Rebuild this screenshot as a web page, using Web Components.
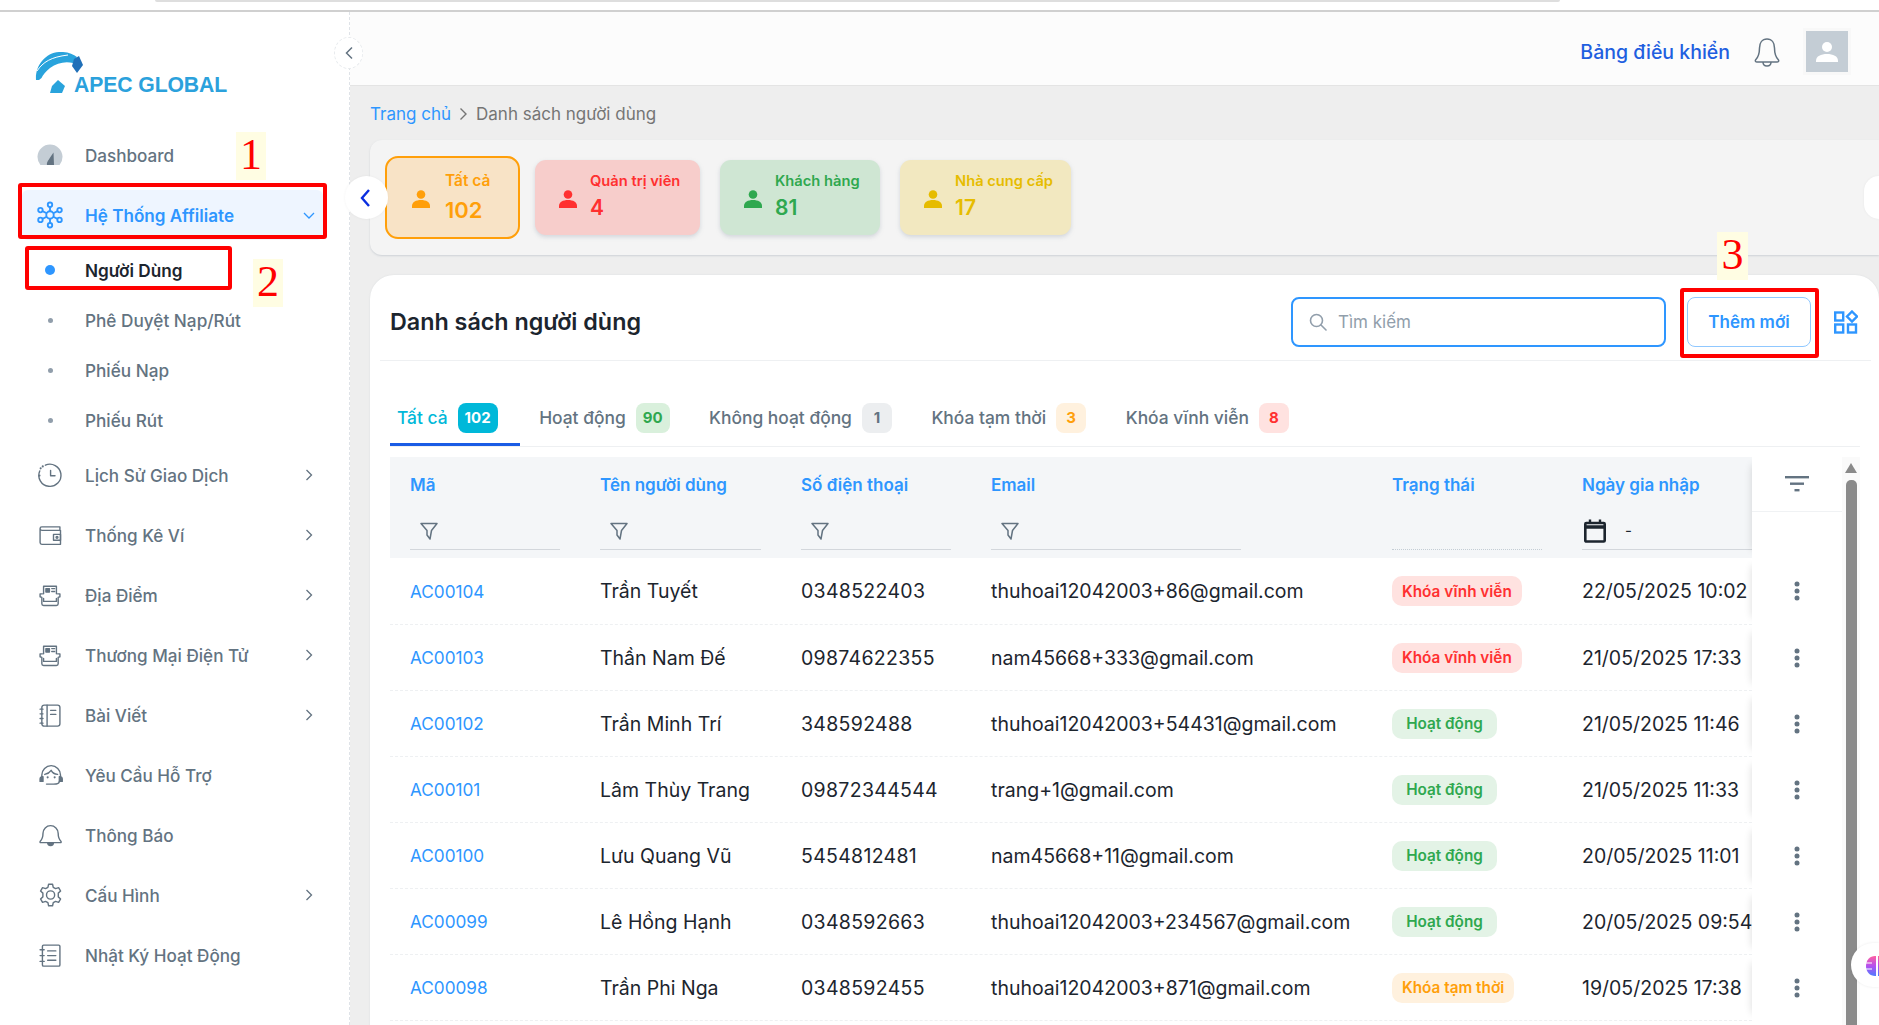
<!DOCTYPE html>
<html lang="vi">
<head>
<meta charset="utf-8">
<title>Danh sách người dùng</title>
<style>
  html, body { margin: 0; height: 1025px; overflow: hidden; background: #eee; }
  body { font-family: Inter, "Noto Sans", sans-serif; color: #1c252e; position: relative; }
  .page { display: flex; height: 1013px; }
</style>
</head>
<body>
<top-strip></top-strip>
<div class="page">
  <side-bar></side-bar>
  <main-area></main-area>
</div>
<note-box kind="frame" x="18" y="183" w="309" h="56"></note-box>
<note-box kind="frame" x="25" y="246" w="207" h="44"></note-box>
<note-box kind="frame" x="1680" y="288" w="139" h="70"></note-box>
<note-box kind="tag" x="236" y="132" w="30" h="48">1</note-box>
<note-box kind="tag" x="253" y="259" w="30" h="48">2</note-box>
<note-box kind="tag" x="1717" y="232" w="31" h="48">3</note-box>
<ai-bubble></ai-bubble>

<script>
const stroke = (body, size = 28) => `<svg width="${size}" height="${size}" viewBox="0 0 24 24" fill="none" stroke="#637381" stroke-width="1.200" stroke-linecap="round" stroke-linejoin="round">${body}</svg>`

const ICONS = {
  gauge: `<svg width="28" height="28" viewBox="0 0 28 28"><path d="M4.400 24A12.500 12.500 0 1 1 23.600 24Z" fill="#c4cdd5"/><path d="M17.500 11.500L18 24H11C10.500 21 12 20 17.500 11.500Z" fill="#637381"/></svg>`,
  network: `<svg width="28" height="28" viewBox="0 0 24 24" fill="none" stroke="#2e96ff" stroke-width="1.600"><circle cx="12" cy="12" r="3.200"/><circle cx="12" cy="3.200" r="1.900"/><circle cx="12" cy="20.800" r="1.900"/><circle cx="3.800" cy="7.800" r="1.900"/><circle cx="20.200" cy="7.800" r="1.900"/><circle cx="3.800" cy="16.200" r="1.900"/><circle cx="20.200" cy="16.200" r="1.900"/><path d="M12 5.100V8.800M12 15.200V18.900M5.500 8.700L9.200 10.500M18.500 8.700L14.800 10.500M5.500 15.300L9.200 13.500M18.500 15.300L14.800 13.500"/></svg>`,
  clock: stroke(`<path d="M8 3.600A9.500 9.500 0 1 1 3.200 8.500" /><path d="M3 12.500v.01M4 6.300v.01M5.800 4.600v.01" stroke-width="1.800"/><path d="M12.500 8v4.700h3.800"/>`),
  wallet: stroke(`<path d="M3.500 6.500V18.500A1.500 1.500 0 0 0 5 20H21V8H5A1.500 1.500 0 0 1 3.500 6.500ZM3.500 6.500A1.500 1.500 0 0 1 5 5H20.500V8"/><rect x="15" y="11.500" width="6" height="5"/><circle cx="18" cy="14" r=".8"/>`),
  store: stroke(`<path d="M5.500 11H3.500V13.500L5 14V19.500A1.500 1.500 0 0 0 6.500 21H17.500A1.500 1.500 0 0 0 19 19.500V14L20.500 13.500V11H18.500"/><path d="M6.500 11V4.500H17.500V11M6.500 15V17.500H17.500V15"/><rect x="8.500" y="6.500" width="3" height="3" fill="#637381"/><path d="M13.500 6.500H16M13.500 9H16"/>`),
  note: stroke(`<rect x="5" y="3.500" width="15.500" height="18" rx="2"/><path d="M9.500 3.500V21.500M12.500 8H17M12.500 11.500H17M3.500 7H6M3.500 11H6M3.500 15H6M3.500 19H6"/>`),
  support: stroke(`<path d="M5 14.500V12A8 8 0 0 1 21 12V14.500"/><path d="M5 13.500A1.800 1.800 0 0 0 3.500 15.300V17.500H6V13.500Z" fill="#637381"/><path d="M21 13.500A1.800 1.800 0 0 1 22.500 15.300V17.500H20V13.500Z" fill="#637381"/><path d="M7.500 11.500C10 11 12 9.500 13 8C14 10 16 11.300 18.500 11.500M20 17.500C20 19 18 19.800 15 19.800H9"/><path d="M10 14v.01M16 14v.01" stroke-width="1.800"/>`),
  bell: stroke(`<path d="M6 10.500A6.500 6.500 0 0 1 19 10.500C19 14 19.500 15.500 21.500 17.500V18.500H3.500V17.500C5.500 15.500 6 14 6 10.500Z"/><path d="M10 18.500A2.500 2.500 0 0 0 15 18.500" fill="#637381"/>`),
  gear: stroke(`<circle cx="12.500" cy="12" r="3.500"/><path d="M10.800 2.800H14.200L14.800 5.400L16.800 6.500L19.400 5.700L21.100 8.600L19.100 10.400V13.600L21.100 15.400L19.400 18.300L16.800 17.500L14.800 18.600L14.200 21.200H10.800L10.200 18.600L8.200 17.500L5.600 18.300L3.900 15.400L5.900 13.600V10.400L3.900 8.600L5.600 5.700L8.200 6.500L10.200 5.400Z"/>`),
  log: stroke(`<rect x="5.500" y="3.500" width="15" height="18" rx="1"/><path d="M10 8.500H17M10 12.500H17M10 16.500H17M3.500 7.500H7M3.500 12.500H7M3.500 17.500H7"/>`)
}

class TopStrip extends HTMLElement {
  connectedCallback() {
    const root = this.attachShadow({ mode: 'open' })
    root.innerHTML = `
      <style>
        :host { display: block; height: 12px; background: #fff; box-sizing: border-box; border-bottom: 2px solid #d0d0d0; }
        div { height: 2px; margin: 0 319px 0 155px; background: #dedede; border-radius: 0 0 8px 8px; }
      </style>
      <div></div>`
  }
}
customElements.define('top-strip', TopStrip)

class SideItem extends HTMLElement {
  connectedCallback() {
    const icon = this.getAttribute('icon')
    const arrow = this.getAttribute('arrow')
    const root = this.attachShadow({ mode: 'open' })
    const chevron = arrow === 'down'
      ? '<path d="M1 4l5 5 5-5"/>'
      : '<path d="M3.500 1l5 5-5 5"/>'
    root.innerHTML = `
      <style>
        :host { display: flex; align-items: center; height: 60px; padding: 0 26px 0 22px; font-size: 17.100px; font-weight: 500; color: #637381; }
        .row { flex: 1; height: 50px; display: flex; align-items: center; padding: 0 8px 0 14px; border-radius: 6px; }
        :host([open]) .row { background: #eef5ff; color: #2e96ff; font-weight: 600; }
        .icon { width: 28px; height: 28px; margin-right: 21px; }
        .label { flex: 1; }
        svg.arrow { width: 12px; height: 12px; fill: none; stroke: #637381; stroke-width: 1.300; }
        :host([open]) svg.arrow { stroke: #2e96ff; }
      </style>
      <div class="row">
        <span class="icon">${ICONS[icon]}</span>
        <span class="label"><slot></slot></span>
        ${arrow ? `<svg class="arrow" viewBox="0 0 12 12">${chevron}</svg>` : ''}
      </div>`
  }
}
customElements.define('side-item', SideItem)

class SideSub extends HTMLElement {
  connectedCallback() {
    const root = this.attachShadow({ mode: 'open' })
    root.innerHTML = `
      <style>
        :host { display: flex; align-items: center; height: 50px; padding-left: 50px; font-size: 17.200px; font-weight: 500; color: #637381; position: relative; }
        .dot { width: 5px; height: 5px; border-radius: 50%; background: #919eab; margin-left: -2.500px; margin-right: 32.500px; }
        :host([active]) { color: #1c252e; font-weight: 600; }
        :host([active]) .dot { width: 10px; height: 10px; background: #2e96ff; margin-left: -5px; margin-right: 30px; }
      </style>
      <span class="dot"></span><slot></slot>`
  }
}
customElements.define('side-sub', SideSub)

class SideBar extends HTMLElement {
  connectedCallback() {
    const root = this.attachShadow({ mode: 'open' })
    root.innerHTML = `
      <style>
        :host { display: block; width: 350px; flex: none; box-sizing: border-box; background: #fff; border-right: 1px dashed #dfe3e8; position: relative; }
        .logo { height: 113px; position: relative; box-sizing: border-box; }
        .logo svg { display: block; position: absolute; left: 35px; top: 40px; }
        .logo b { position: absolute; left: 74px; top: 61px; font: bold 21.200px "Liberation Sans", sans-serif; color: #2ba1dc; white-space: nowrap; letter-spacing: -.1px; }
        .collapse { position: absolute; right: -14px; top: 25px; width: 27px; height: 30px; border-radius: 50%; background: #fff; border: 1px dashed #e8ebee; display: flex; align-items: center; justify-content: center; z-index: 3; }
      </style>
      <div class="logo">
        <svg width="50" height="42" viewBox="0 0 50 42">
          <path d="M1 28C0 14 10 1 24 0C32 -.5 38 2 42 5L38 11C30 9 22 11 15 16C11 19 8 23 6.500 26L4 28Z" fill="#29a3dc"/>
          <path d="M2 19C8 10 16 5 33 3" fill="none" stroke="#fff" stroke-width="1"/>
          <path d="M39 7L44 4L48 13L42 21L37 14Z" fill="#1f6fb8"/>
          <path d="M15 41L17 34L23 28L30 34L27 41Z" fill="#29a3dc"/>
        </svg>
        <b>APEC GLOBAL</b>
      </div>
      <div class="collapse"><svg width="10" height="14" viewBox="0 0 10 14" fill="none" stroke="#637381" stroke-width="1.500"><path d="M8 1.500L2.500 7l5.500 5.500"/></svg></div>
      <side-item icon="gauge">Dashboard</side-item>
      <side-item icon="network" arrow="down" open>Hệ Thống Affiliate</side-item>
      <div>
        <side-sub active>Người Dùng</side-sub>
        <side-sub>Phê Duyệt Nạp/Rút</side-sub>
        <side-sub>Phiếu Nạp</side-sub>
        <side-sub>Phiếu Rút</side-sub>
      </div>
      <side-item icon="clock" arrow="right">Lịch Sử Giao Dịch</side-item>
      <side-item icon="wallet" arrow="right">Thống Kê Ví</side-item>
      <side-item icon="store" arrow="right">Địa Điểm</side-item>
      <side-item icon="store" arrow="right">Thương Mại Điện Tử</side-item>
      <side-item icon="note" arrow="right">Bài Viết</side-item>
      <side-item icon="support">Yêu Cầu Hỗ Trợ</side-item>
      <side-item icon="bell">Thông Báo</side-item>
      <side-item icon="gear" arrow="right">Cấu Hình</side-item>
      <side-item icon="log">Nhật Ký Hoạt Động</side-item>`
  }
}
customElements.define('side-bar', SideBar)

class TopHeader extends HTMLElement {
  connectedCallback() {
    const root = this.attachShadow({ mode: 'open' })
    root.innerHTML = `
      <style>
        :host { display: flex; align-items: center; justify-content: flex-end; height: 74px; box-sizing: border-box; background: #fcfcfc; border-bottom: 1px solid #e4e4e4; padding: 6px 31px 0 0; }
        a { font-size: 19.500px; font-weight: 500; color: #1f5fe0; margin-right: 23px; }
        .bell { display: block; margin-right: 25px; }
        .avatar { width: 42px; height: 41px; background: #c4cdd5; box-shadow: 0 0 0 3px #f8f8f8; display: flex; align-items: center; justify-content: center; }
      </style>
      <a>Bảng điều khiển</a>
      <svg class="bell" width="28" height="30" viewBox="0 0 28 30" fill="none" stroke="#637381" stroke-width="1.500" stroke-linejoin="round"><path d="M14 2C9 2 6.500 6 6.500 11C6.500 17 5.500 20 2.500 23C2 24 2.500 25 4 25H24C25.500 25 26 24 25.500 23C22.500 20 21.500 17 21.500 11C21.500 6 19 2 14 2Z"/><path d="M10 25C10 28 12 29 14 29C16 29 18 28 18 25"/></svg>
      <span class="avatar"><svg width="22" height="22" viewBox="0 0 22 22" fill="#fff"><circle cx="11" cy="6" r="5"/><path d="M0 20C0 15 5 13 11 13C17 13 22 15 22 20V21H0Z"/></svg></span>`
  }
}
customElements.define('top-header', TopHeader)

class BreadCrumb extends HTMLElement {
  connectedCallback() {
    const root = this.attachShadow({ mode: 'open' })
    root.innerHTML = `
      <style>
        :host { display: flex; align-items: center; height: 54px; box-sizing: border-box; padding: 2px 0 0 20px; font-size: 17px; color: #757575; }
        a { color: #2e96ff; }
        svg { margin: 0 8px; }
      </style>
      <a>Trang chủ</a>
      <svg width="9" height="14" viewBox="0 0 9 14" fill="none" stroke="#757575" stroke-width="1.400"><path d="M1.500 1.500L7 7l-5.500 5.500"/></svg>
      <span>Danh sách người dùng</span>`
  }
}
customElements.define('bread-crumb', BreadCrumb)

class StatCard extends HTMLElement {
  connectedCallback() {
    const c = this.getAttribute('color')
    const root = this.attachShadow({ mode: 'open' })
    root.innerHTML = `
      <style>
        :host { display: flex; align-items: center; box-sizing: border-box; height: 75px; padding-left: 24px; border-radius: 11px; box-shadow: 0 2px 4px rgba(145,158,171,.35); color: ${c}; background: ${this.getAttribute('bg')}; width: ${this.getAttribute('w')}px; }
        :host([selected]) { height: 83px; padding-left: 25px; border: 2px solid ${c}; border-radius: 13px; box-shadow: none; margin-right: -5px; }
        svg { flex: none; margin-right: 13px; margin-top: 2px; }
        :host([selected]) svg { margin-right: 15px; }
        .text { padding-bottom: 2px; }
        .label { font-size: 14.700px; font-weight: 600; white-space: nowrap; }
        .value { font-size: 21px; font-weight: 600; margin-top: 5px; line-height: 26px; }
        :host([selected]) .label { font-size: 15.500px; }
        :host([selected]) .value { font-size: 22px; margin-top: 7px; }
      </style>
      <svg width="18" height="18" viewBox="0 0 18 18" fill="${c}"><circle cx="9" cy="4.500" r="4.300"/><path d="M0 18V16C0 12 4 10 9 10C14 10 18 12 18 16V18Z"/></svg>
      <div class="text">
        <div class="label">${this.getAttribute('label')}</div>
        <div class="value">${this.getAttribute('value')}</div>
      </div>`
  }
}
customElements.define('stat-card', StatCard)

class StatStrip extends HTMLElement {
  connectedCallback() {
    const root = this.attachShadow({ mode: 'open' })
    root.innerHTML = `
      <style>
        :host { display: flex; align-items: center; gap: 20px; height: 115px; margin-left: 20px; padding-left: 15px; background: #f4f4f4; border-radius: 12px 0 0 12px; box-shadow: 0 1px 2px rgba(145,158,171,.35); position: relative; }
        .nav { position: absolute; top: 36px; height: 43px; background: #fff; display: flex; align-items: center; justify-content: center; box-sizing: border-box; box-shadow: 0 0 3px rgba(0,0,0,.05); }
        .prev { left: -25px; width: 43px; border-radius: 50%; padding-right: 4px; z-index: 2; }
        .next { right: 0; width: 15px; border-radius: 22px 0 0 22px; }
      </style>
      <span class="nav prev"><svg width="12" height="20" viewBox="0 0 12 20" fill="none" stroke="#0a2ee0" stroke-width="2.400"><path d="M10 2L3 10l7 8"/></svg></span>
      <slot></slot>
      <span class="nav next"></span>`
  }
}
customElements.define('stat-strip', StatStrip)

class TabItem extends HTMLElement {
  connectedCallback() {
    const root = this.attachShadow({ mode: 'open' })
    root.innerHTML = `
      <style>
        :host { display: flex; align-items: flex-start; gap: 10px; height: 43px; padding: 0 20px 0 7px; font-size: 17.400px; line-height: 30px; font-weight: 500; color: #637381; box-sizing: border-box; white-space: nowrap; }
        :host([active]) { color: #00b8d9; border-bottom: 3px solid #1a5ce5; padding-right: 22px; }
        .badge { min-width: 30px; box-sizing: border-box; height: 30px; padding: 0 7px; border-radius: 8px; display: flex; align-items: center; justify-content: center; font-size: 15px; font-weight: 700; color: ${this.getAttribute('fg')}; background: ${this.getAttribute('bg')}; }
      </style>
      <slot></slot>
      <span class="badge">${this.getAttribute('count')}</span>`
  }
}
customElements.define('tab-item', TabItem)

const PILLS = {
  'Khóa vĩnh viễn': ['#ff3030', '#ffe2e0'],
  'Hoạt động': ['#2fa84f', '#e3f3e6'],
  'Khóa tạm thời': ['#ff9f0a', '#fff1de']
}

class StatusPill extends HTMLElement {
  connectedCallback() {
    const root = this.attachShadow({ mode: 'open' })
    const [fg, bg] = PILLS[this.textContent]
    root.innerHTML = `
      <style>
        :host { display: inline-flex; align-items: center; justify-content: center; height: 30px; min-width: 105px; padding: 0 10px; box-sizing: border-box; border-radius: 10px; font-size: 15.300px; font-weight: 600; white-space: nowrap; color: ${fg}; background: ${bg}; }
      </style>
      <slot></slot>`
  }
}
customElements.define('status-pill', StatusPill)

const USERS = [
  ['AC00104', 'Trần Tuyết', '0348522403', 'thuhoai12042003+86@gmail.com', 'Khóa vĩnh viễn', '22/05/2025 10:02'],
  ['AC00103', 'Thần Nam Đế', '09874622355', 'nam45668+333@gmail.com', 'Khóa vĩnh viễn', '21/05/2025 17:33'],
  ['AC00102', 'Trần Minh Trí', '348592488', 'thuhoai12042003+54431@gmail.com', 'Hoạt động', '21/05/2025 11:46'],
  ['AC00101', 'Lâm Thùy Trang', '09872344544', 'trang+1@gmail.com', 'Hoạt động', '21/05/2025 11:33'],
  ['AC00100', 'Lưu Quang Vũ', '5454812481', 'nam45668+11@gmail.com', 'Hoạt động', '20/05/2025 11:01'],
  ['AC00099', 'Lê Hồng Hạnh', '0348592663', 'thuhoai12042003+234567@gmail.com', 'Hoạt động', '20/05/2025 09:54'],
  ['AC00098', 'Trần Phi Nga', '0348592455', 'thuhoai12042003+871@gmail.com', 'Khóa tạm thời', '19/05/2025 17:38']
]

const FUNNEL = `<svg width="18" height="18" viewBox="0 0 18 18" fill="none" stroke="#637381" stroke-width="1.500" stroke-linejoin="round"><path d="M1 1.500H17L11.500 8.500L10 17L7 13V8.500Z"/></svg>`

class UserTable extends HTMLElement {
  connectedCallback() {
    const root = this.attachShadow({ mode: 'open' })
    const filter = w => `<div class="cell filter"><span class="line" style="width:${w}px">${FUNNEL}</span></div>`
    const rows = USERS.map(u => `
      <div class="row">
        <div class="cell code">${u[0]}</div>
        <div class="cell">${u[1]}</div>
        <div class="cell phone">${u[2]}</div>
        <div class="cell">${u[3]}</div>
        <div class="cell"><status-pill>${u[4]}</status-pill></div>
        <div class="cell date">${u[5]}</div>
        <div class="cell more"><svg width="6" height="20" viewBox="0 0 6 20" fill="#637381"><circle cx="3" cy="3" r="2.500"/><circle cx="3" cy="10" r="2.500"/><circle cx="3" cy="17" r="2.500"/></svg></div>
      </div>`).join('')
    root.innerHTML = `
      <style>
        :host { display: grid; grid-template-columns: 1452px 18px; margin-left: 20px; font-size: 19.500px; color: #1c252e; }
        .head, .row { display: grid; grid-template-columns: 190px 201px 190px 401px 190px 190px 90px; }
        .cell { padding-left: 20px; display: flex; align-items: center; white-space: nowrap; overflow: hidden; min-width: 0; }
        .row { height: 65px; border-bottom: 1px dashed #eef0f2; }
        .head + .row { height: 66px; }
        .code { color: #2e96ff; font-size: 17.200px; }
        .phone { letter-spacing: .3px; }
        .more { padding: 0 0 1px; justify-content: center; background: #fff; box-shadow: -8px 0 8px -8px rgba(0,0,0,.14); position: relative; margin-bottom: -1px; }
        .head { height: 101px; background: #f4f6f8; grid-template-rows: 55px 46px; }
        .title { color: #2e96ff; font-size: 17px; font-weight: 600; }
        .line { display: flex; align-items: center; height: 38px; box-sizing: border-box; border-bottom: 1px solid #d3d7dc; padding-left: 10px; }
        .filter { align-items: flex-start; }
        .status-line { border-bottom: 1px dotted #c4cdd5; padding: 0; }
        .cal { padding-left: 2px; gap: 19px; color: #1c252e; font-size: 15px; }
        .action { grid-row: 1 / 3; grid-column: 7; background: #fff; box-shadow: -8px 0 8px -8px rgba(0,0,0,.14); display: block; padding: 0; position: relative; }
        .action > div { height: 55px; box-sizing: border-box; border-bottom: 1px solid #f0f2f4; display: flex; align-items: center; justify-content: center; }
        .bar { background: #fafafa; position: relative; height: 600px; }
        .bar i { position: absolute; left: 3px; top: 6px; width: 0; height: 0; border: 6.500px solid transparent; border-top: 0; border-bottom: 10px solid #8a8a8a; }
        .bar b { position: absolute; left: 4px; top: 23px; bottom: 0; width: 11px; background: #8a8a8a; border-radius: 5px 5px 0 0; }
      </style>
      <div>
        <div class="head">
          <div class="cell title">Mã</div>
          <div class="cell title">Tên người dùng</div>
          <div class="cell title">Số điện thoại</div>
          <div class="cell title">Email</div>
          <div class="cell title">Trạng thái</div>
          <div class="cell title">Ngày gia nhập</div>
          <div class="cell action"><div><svg width="24" height="18" viewBox="0 0 24 18" fill="#637381"><rect x="0" y="1" width="24" height="2.400"/><rect x="5" y="7.500" width="14" height="2.400"/><rect x="9.500" y="14" width="5" height="2.400"/></svg></div></div>
          ${filter(150)}
          ${filter(161)}
          ${filter(150)}
          ${filter(250)}
          <div class="cell filter"><span class="line status-line" style="width:150px"></span></div>
          <div class="cell filter"><span class="line cal" style="width:170px"><svg width="22" height="24" viewBox="0 0 22 24" fill="none" stroke="#1c252e" stroke-width="2.600"><rect x="1.300" y="4" width="19.400" height="18.500" rx="1"/><path d="M1 8H21" stroke-width="3.500"/><path d="M6 .500V4M16 .500V4" stroke-width="2.400"/></svg>-</span></div>
        </div>
        ${rows}
      </div>
      <div class="bar"><i></i><b></b></div>`
  }
}
customElements.define('user-table', UserTable)

class ListCard extends HTMLElement {
  connectedCallback() {
    const root = this.attachShadow({ mode: 'open' })
    root.innerHTML = `
      <style>
        :host { display: block; margin: 20px 0 0 20px; height: 800px; background: #fff; border-radius: 24px 24px 0 0; overflow: hidden; box-shadow: 0 0 2px rgba(145,158,171,.2); }
        .head { display: flex; align-items: center; height: 77px; padding: 8px 0 0 10px; margin: 0 8px 0 10px; border-bottom: 1px solid #eef0f2; }
        h2 { flex: 1; margin: 0; font-size: 23.300px; font-weight: 600; color: #1c252e; }
        .search { display: flex; align-items: center; width: 375px; height: 50px; box-sizing: border-box; border: 2px solid #2e96ff; border-radius: 8px; padding-left: 16px; font-size: 17px; color: #919eab; gap: 11px; }
        button { width: 124px; height: 50px; margin-left: 21px; background: #fff; border: 1px solid #90c8ff; border-radius: 8px; font: 600 17px Inter, sans-serif; color: #2e96ff; padding: 0; }
        .grid { display: block; margin: 0 13px 0 23px; }
        .tabs { display: flex; gap: 12.500px; align-items: flex-end; height: 86px; margin: 0 19px 10px 20px; box-sizing: border-box; border-bottom: 1px solid #eef0f2; }
      </style>
      <div class="head">
        <h2>Danh sách người dùng</h2>
        <div class="search">
          <svg width="18" height="18" viewBox="0 0 18 18" fill="none" stroke="#919eab" stroke-width="1.600" stroke-linecap="round"><circle cx="7.500" cy="7.500" r="6"/><path d="M12 12l5 5"/></svg>
          <span>Tìm kiếm</span>
        </div>
        <button>Thêm mới</button>
        <svg class="grid" width="24" height="24" viewBox="0 0 24 24" fill="none" stroke="#2e96ff" stroke-width="2.400"><rect x="1.200" y="2.500" width="8" height="8"/><rect x="1.200" y="14.500" width="8" height="8"/><rect x="14" y="14.500" width="8" height="8"/><path d="M18 1.500L23 6.500L18 11.500L13 6.500Z"/></svg>
      </div>
      <div class="tabs"><slot name="tabs"></slot></div>
      <user-table></user-table>`
  }
}
customElements.define('list-card', ListCard)

class MainArea extends HTMLElement {
  connectedCallback() {
    const root = this.attachShadow({ mode: 'open' })
    root.innerHTML = `
      <style>
        :host { display: block; flex: 1; min-width: 0; background: #eee; position: relative; z-index: 1; }
      </style>
      <top-header></top-header>
      <bread-crumb></bread-crumb>
      <stat-strip>
        <stat-card selected w="135" color="#ff9f0a" bg="#f8e3c6" label="Tất cả" value="102"></stat-card>
        <stat-card w="165" color="#ff3030" bg="#f7cdcb" label="Quản trị viên" value="4"></stat-card>
        <stat-card w="160" color="#2fa84f" bg="#cfe6d3" label="Khách hàng" value="81"></stat-card>
        <stat-card w="171" color="#e6bc00" bg="#f2e8c0" label="Nhà cung cấp" value="17"></stat-card>
      </stat-strip>
      <list-card>
        <tab-item slot="tabs" active count="102" fg="#fff" bg="#00b8d9">Tất cả</tab-item>
        <tab-item slot="tabs" count="90" fg="#2fa84f" bg="#d9f0dc">Hoạt động</tab-item>
        <tab-item slot="tabs" count="1" fg="#637381" bg="#eceef0">Không hoạt động</tab-item>
        <tab-item slot="tabs" count="3" fg="#ff9f0a" bg="#fff1de">Khóa tạm thời</tab-item>
        <tab-item slot="tabs" count="8" fg="#ff3030" bg="#ffe2e0">Khóa vĩnh viễn</tab-item>
      </list-card>`
  }
}
customElements.define('main-area', MainArea)

class NoteBox extends HTMLElement {
  connectedCallback() {
    const attr = n => this.getAttribute(n) + 'px'
    const root = this.attachShadow({ mode: 'open' })
    root.innerHTML = `
      <style>
        :host { display: block; position: absolute; box-sizing: border-box; left: ${attr('x')}; top: ${attr('y')}; width: ${attr('w')}; height: ${attr('h')}; z-index: 5; }
        :host([kind=frame]) { border: 4px solid #f00; border-radius: 3px; }
        :host([kind=tag]) { background: #fffde3; color: #f00; font: 44px/46px "Liberation Serif", serif; text-align: center; }
      </style>
      <slot></slot>`
  }
}
customElements.define('note-box', NoteBox)

class AiBubble extends HTMLElement {
  connectedCallback() {
    const root = this.attachShadow({ mode: 'open' })
    root.innerHTML = `
      <style>
        :host { display: block; position: absolute; left: 1851px; top: 943px; width: 28px; height: 44px; border-radius: 22px 0 0 22px; background: #fff; z-index: 6; box-shadow: 0 0 3px rgba(0,0,0,.08); overflow: hidden; }
        svg { position: absolute; left: 14px; top: 12px; }
      </style>
      <svg width="24" height="22" viewBox="0 0 24 22"><defs><linearGradient id="g" x1="0" y1="0" x2="0" y2="1"><stop offset="0" stop-color="#ff5fa0"/><stop offset=".5" stop-color="#b44ff0"/><stop offset="1" stop-color="#4f7cff"/></linearGradient></defs><path d="M10 1C5 1 1 5 1 11C1 17 5 21 10 21H11V1Z" fill="url(#g)"/><path d="M13 1C18 1 23 5 23 11C23 17 18 21 13 21Z" fill="url(#g)"/><path d="M1 8H7M1 14H7" stroke="#fff" stroke-width="1.200"/></svg>`
  }
}
customElements.define('ai-bubble', AiBubble)
</script>
</body>
</html>
